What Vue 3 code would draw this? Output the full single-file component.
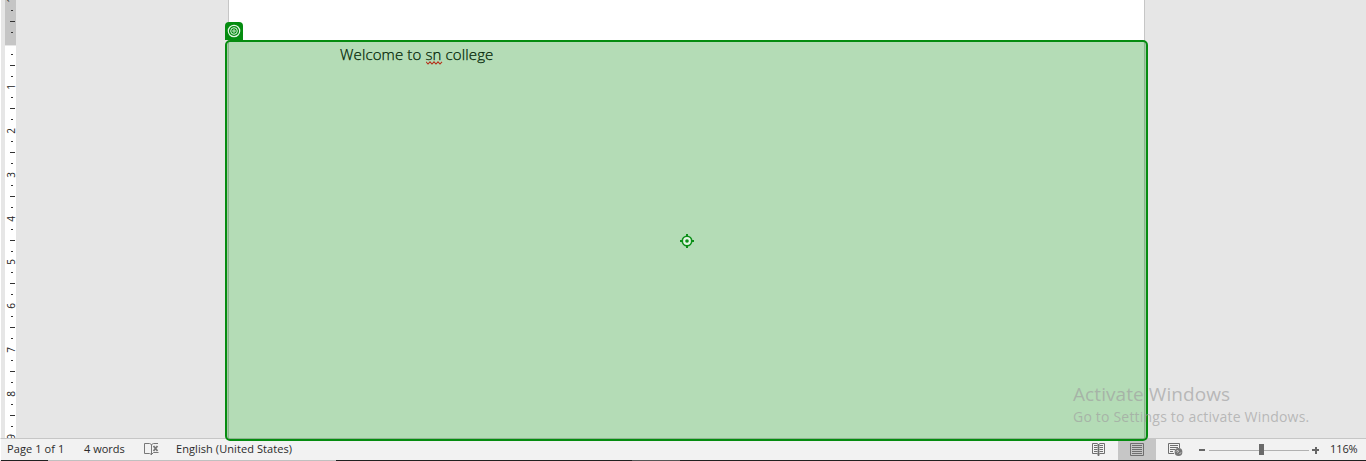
<script setup>
const step = 43.75
const origin = 43.6
const marks = []
for (let i = -4; i <= 36; i++) {
  if (i === 0) continue
  const y = origin + (i * step) / 4
  const kind = i % 4 === 0 ? 'num' : i % 2 === 0 ? 'line' : 'dot'
  marks.push({ i, y: Math.round(y - 0.9), kind, label: Math.abs(i / 4) })
}
</script>

<template>
  <div class="window">
    <main class="workspace">
      <svg class="ruler" width="17" height="438" shape-rendering="crispEdges">
        <rect x="0" y="0" width="1" height="438" fill="#fff" />
        <rect x="5" y="0" width="11" height="45" fill="#c5c5c5" />
        <rect x="5" y="46" width="11" height="392" fill="#fff" />
        <template v-for="m in marks" :key="m.i">
          <rect v-if="m.kind === 'line'" x="10" :y="m.y" width="5" height="1" fill="#333" />
          <rect v-else-if="m.kind === 'dot'" x="11" :y="m.y" width="2" height="1" fill="#333" />
          <text v-else class="num" :transform="`translate(15 ${m.y + 1}) rotate(-90)`" text-anchor="middle">{{ m.label }}</text>
        </template>
      </svg>
      <div class="page"></div>
      <section class="region">
        <div class="tag">
          <svg width="14" height="14" viewBox="0 0 14 14" fill="none" stroke="#e4f5e5">
            <circle cx="7" cy="7" r="5.7" stroke-width="1.2" />
            <circle cx="7" cy="7" r="3.3" stroke-width="1" />
            <circle cx="7" cy="7" r="1.2" stroke-width=".9" />
          </svg>
        </div>
        <p class="line">Welcome to <span class="typo">sn<svg width="17" height="4" viewBox="0 0 17 4"><path d="M0 .8L2 3L4 .8L6 3L8 .8L10 3L12 .8L14 3L16 .8" fill="none" stroke="#b5321c" stroke-width="1.1" /></svg></span> college</p>
        <svg class="target" width="14" height="14" viewBox="0 0 14 14">
          <path d="M7 0V14M0 7H14" stroke="#0b8f17" stroke-width="2" />
          <circle cx="7" cy="7" r="4.7" fill="#e2f5e2" stroke="#0b8f17" stroke-width="1.6" />
          <circle cx="7" cy="7" r="1.8" fill="#0b8f17" />
        </svg>
      </section>
      <aside class="watermark">
        <div class="wm-title">Activate Windows</div>
        <div class="wm-sub">Go to Settings to activate Windows.</div>
      </aside>
    </main>

    <footer class="status">
      <span class="pages">Page 1 of 1</span>
      <span class="words">4 words</span>
      <svg class="proof" width="16" height="14" viewBox="0 0 16 14" fill="none" stroke="#777">
        <path d="M7.5 12.5L5.5 11.5H.5V1.5H5.5L7.5 2.5V13M7.5 2.5L9.5 1.5H14" />
        <path d="M9.5 4L13.5 9M13.5 4L9.5 9" stroke-width="1.8" />
        <path d="M8 12L9.5 10.5H14.5" />
      </svg>
      <span class="lang">English (United States)</span>
      <div class="views">
        <div class="view">
          <svg width="14" height="13" viewBox="0 0 14 13" fill="none" stroke="#6f6f6f">
            <path d="M6.5 1.5L5 .5H.5V10.5H5L6.5 11.5L8 10.5H12.5V.5H8L6.5 1.5" />
            <path d="M6.5 1V13" stroke-width="1.6" />
            <path d="M2 2.5H5.5M2 4.5H5.5M2 6.5H5.5M2 8.5H5.5M7.5 2.5H11M7.5 4.5H11M7.5 6.5H11M7.5 8.5H11" />
          </svg>
        </div>
        <div class="view active">
          <svg width="14" height="13" viewBox="0 0 14 13" fill="none" stroke="#6f6f6f">
            <path d="M.5 .5H13.5V12.5H.5ZM2 2.5H12M2 4.5H12M2 6.5H12M2 8.5H12M2 10.5H12" />
          </svg>
        </div>
        <div class="view">
          <svg width="15" height="13" viewBox="0 0 15 13" fill="none" stroke="#6f6f6f">
            <path d="M6 10.5H.5V.5H11.5V5M2 2.5H10M2 4.5H10M2 6.5H7M2 8.5H5" />
            <circle cx="10.5" cy="9" r="3.9" fill="#777" stroke="none" />
            <path d="M8 8.6L9.2 7.4L10.6 8L9.5 9.6M11.5 11L13 9.4" stroke="#ddd" stroke-width=".9" />
          </svg>
        </div>
      </div>
      <svg class="zoom" width="122" height="12" viewBox="0 0 122 12" shape-rendering="crispEdges">
        <path d="M0 6H6M113 6H120M116.5 2.5V9.5" stroke="#666" stroke-width="2" />
        <path d="M10 6.5H110" stroke="#b1b1b1" />
        <rect x="60" y="0" width="5" height="11" fill="#6a6a6a" />
      </svg>
      <span class="percent">116%</span>
    </footer>
    <div class="taskbar"><i class="t1"></i><i class="t2"></i><i class="t3"></i><i class="t4"></i><i class="t5"></i></div>
  </div>
</template>

<style>
body { margin: 0; overflow: hidden; }
</style>

<style scoped>
.window {
  width: 1366px;
  height: 461px;
  display: flex;
  flex-direction: column;
  background: #e6e6e6;
  font-family: "Open Sans", "Noto Sans", sans-serif;
  overflow: hidden;
}
.workspace { position: relative; height: 438px; display: flex; }
.ruler { display: block; overflow: hidden; }
.num { font: 10px "Open Sans", sans-serif; fill: #222; }
.page {
  box-sizing: border-box;
  width: 917px;
  margin-left: 211px;
  background: #fff;
  border: solid #c6c6c6;
  border-width: 0 1px;
}
.region {
  position: absolute;
  z-index: 1;
  left: 225px;
  top: 40px;
  box-sizing: border-box;
  width: 923px;
  height: 401px;
  border: 2px solid #058c10;
  border-radius: 5px;
  background: rgba(5, 140, 12, 0.3);
}
.tag {
  position: absolute;
  left: -2px;
  top: -20px;
  width: 18px;
  height: 18px;
  display: flex;
  align-items: center;
  justify-content: center;
  background: #058c10;
  border-radius: 4px 4px 0 0;
}
.line {
  margin: 1px 0 0 113px;
  font-size: 15px;
  font-weight: 300;
  line-height: 22px;
  letter-spacing: 0.13px;
  color: #002404;
  -webkit-text-stroke: 0.25px #002404;
  white-space: nowrap;
}
.typo { position: relative; }
.typo svg { position: absolute; left: 1px; bottom: -1px; }
.target { position: absolute; left: 453px; top: 192px; }
.watermark {
  position: absolute;
  z-index: 2;
  left: 1073px;
  top: 381px;
  color: rgba(160, 160, 160, 0.68);
  white-space: nowrap;
}
.wm-title { font-size: 19px; line-height: 26px; letter-spacing: 0.08px; }
.wm-sub { font-size: 14px; line-height: 20px; letter-spacing: 0.2px; }
.status {
  box-sizing: border-box;
  height: 22px;
  display: flex;
  align-items: center;
  border-top: 1px solid #c6c6c6;
  border-left: 1px solid #fff;
  background: #f2f2f2;
  font-size: 11px;
  line-height: 18px;
  color: #2b2b2b;
  white-space: nowrap;
}
.status span { padding-bottom: 2px; }
.pages { width: 77px; margin-left: 6px; letter-spacing: 0.1px; }
.words { width: 60px; }
.proof { width: 16px; margin: 0 16px 2px 0; }
.lang { width: 904px; letter-spacing: 0.08px; }
.views { display: flex; height: 21px; }
.view { width: 38px; display: flex; align-items: center; justify-content: center; padding-bottom: 1px; box-sizing: border-box; }
.active { background: #c6c6c6; }
.zoom { margin-left: 5px; }
.percent { margin-left: 9px; letter-spacing: -0.1px; }
.taskbar { display: flex; height: 1px; margin-left: 1px; background: #202020; }
.t1 { width: 47px; }
.t2 { width: 288px; background: #c0c0c0; }
.t3 { width: 296px; }
.t4 { width: 48px; background: #555; }
.t5 { flex: 1; }
</style>
